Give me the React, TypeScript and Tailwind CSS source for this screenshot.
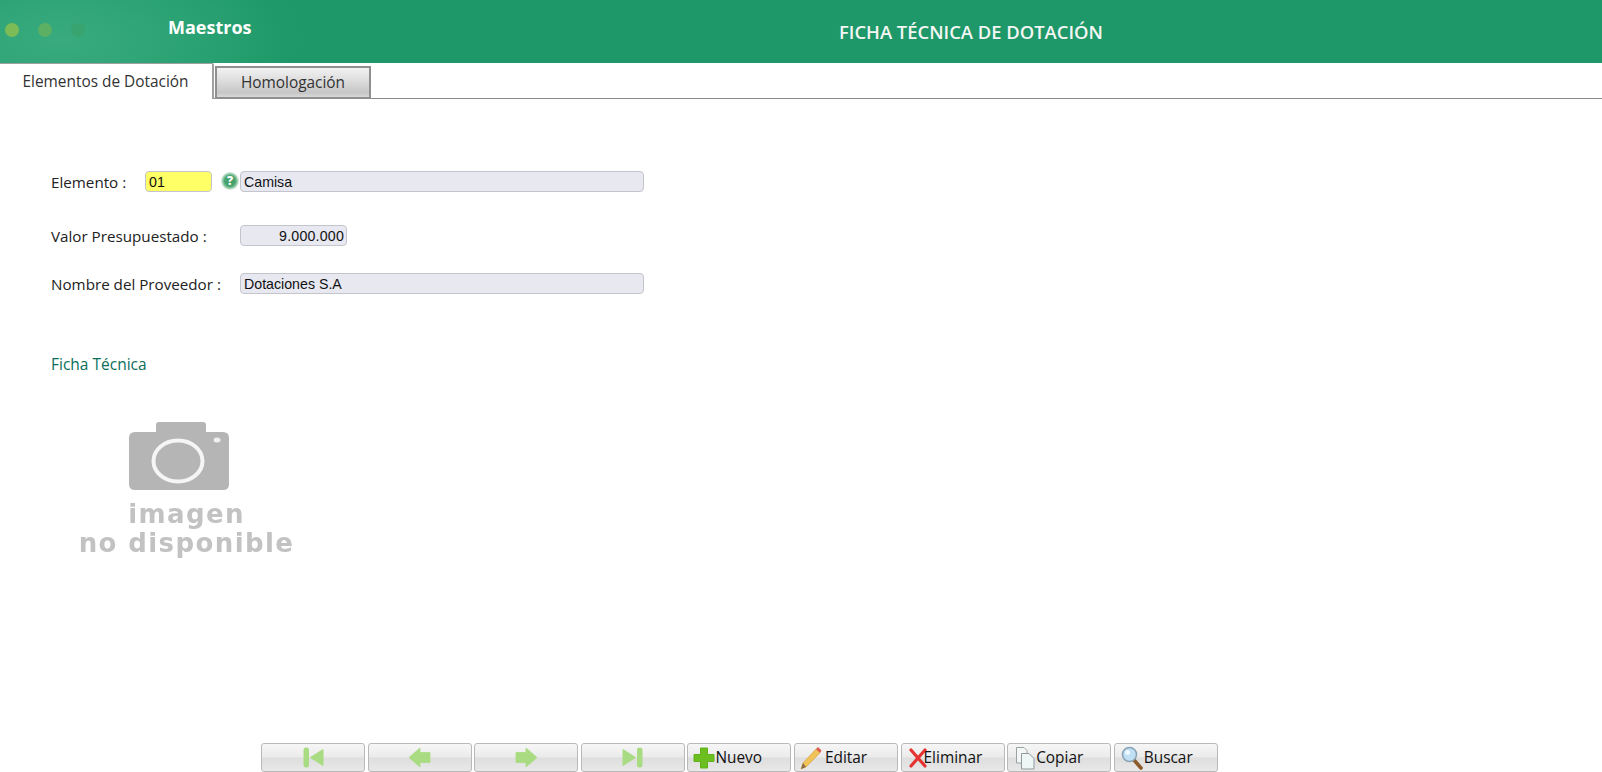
import React from "react";

const uiFont = "font-['Open_Sans','Noto_Sans',sans-serif]";
const fieldFont = "font-['Liberation_Sans',Arial,sans-serif]";

const NavFirst = () => (
  <svg width="21" height="21" viewBox="0 0 21 21">
    <rect x="0.5" y="0.5" width="5.5" height="20" rx="2.5" fill="#a9dc82" />
    <path d="M7.5 10.5 L20 2.5 V18.5 Z" fill="#a9dc82" stroke="#a9dc82" strokeLinejoin="round" />
  </svg>
);

const NavPrev = () => (
  <svg width="23" height="21" viewBox="0 0 23 21">
    <path d="M1 10.5 L12 1 V5.5 H22 V15.5 H12 V20 Z" fill="#a9dc82" stroke="#a9dc82" strokeWidth="0.8" strokeLinejoin="round" />
  </svg>
);

const NavNext = () => (
  <svg width="23" height="21" viewBox="0 0 23 21">
    <path d="M22 10.5 L11 1 V5.5 H1 V15.5 H11 V20 Z" fill="#a9dc82" stroke="#a9dc82" strokeWidth="0.8" strokeLinejoin="round" />
  </svg>
);

const NavLast = () => (
  <svg width="21" height="21" viewBox="0 0 21 21">
    <path d="M1 2.5 L13.5 10.5 L1 18.5 Z" fill="#a9dc82" stroke="#a9dc82" strokeLinejoin="round" />
    <rect x="15" y="0.5" width="5.5" height="20" rx="2.5" fill="#a9dc82" />
  </svg>
);

const PlusIcon = () => (
  <svg width="22" height="22" viewBox="0 0 22 22" className="shrink-0">
    <path d="M7.5 1 H14.5 V7.5 H21 V14.5 H14.5 V21 H7.5 V14.5 H1 V7.5 H7.5 Z" fill="#6cbf1f" stroke="#62b01a" strokeLinejoin="round" />
  </svg>
);

const PencilIcon = () => (
  <svg width="22" height="24" viewBox="0 0 22 24" className="shrink-0">
    <path d="M16 3 L20 7 L6 21 L1 23 L3 17 Z" fill="#f2c25a" stroke="#d29a38" strokeWidth="0.6" />
    <path d="M16 3 L18 1 L21.5 4.5 L20 7 Z" fill="#dd5b4a" />
    <path d="M3 17 L6 21 L1 23 Z" fill="#8a6a48" />
  </svg>
);

const CrossIcon = () => (
  <svg width="18" height="20" viewBox="0 0 18 20" className="shrink-0">
    <path d="M2 2 L16 18 M16 2 L2 18" stroke="#e53333" strokeWidth="3.2" strokeLinecap="round" />
  </svg>
);

const CopyIcon = () => (
  <svg width="20" height="24" viewBox="0 0 20 24" className="shrink-0">
    <path d="M1.5 1.5 H9 L12 4.5 V17 H1.5 Z" fill="#f4f6f6" stroke="#9aa3a3" />
    <path d="M6.5 7.5 H14 L19 12.5 V23 H6.5 Z" fill="#eef6f6" stroke="#8f9a9a" />
  </svg>
);

const SearchIcon = () => (
  <svg width="22" height="24" viewBox="0 0 22 24" className="shrink-0">
    <path d="M13 14 L20 22" stroke="#8a5a2b" strokeWidth="3.6" strokeLinecap="round" />
    <circle cx="8.5" cy="8.5" r="7" fill="#bfe0f5" stroke="#8aa3b5" strokeWidth="1.6" />
    <circle cx="6.5" cy="6.5" r="2.5" fill="#eef8fd" />
  </svg>
);

const CameraPlaceholder = () => (
  <div className="relative w-[217px] h-[147px]">
    <svg width="100" height="68" viewBox="0 0 100 68" className="absolute left-[51px] top-[7px]">
      <path d="M27 10 V3 Q27 0 30 0 H74 Q77 0 77 3 V10 H94 Q100 10 100 16 V62 Q100 68 94 68 H6 Q0 68 0 62 V16 Q0 10 6 10 Z" fill="#b5b5b5" />
      <ellipse cx="49" cy="39" rx="24.5" ry="20.5" fill="#b5b5b5" stroke="#f5f5f5" strokeWidth="4" />
      <ellipse cx="88" cy="18" rx="3.5" ry="2.5" fill="#f0f0f0" />
    </svg>
    <div className="absolute left-0 right-0 top-[85px] text-center font-['DejaVu_Sans',sans-serif] font-bold text-[#c2c2c2] text-[26px] leading-[29px] tracking-[1.4px] blur-[0.6px]">
      <div>imagen</div>
      <div>no disponible</div>
    </div>
  </div>
);

const ToolButton = ({ className, children }: { className: string; children: React.ReactNode }) => (
  <button className={`flex items-center w-[104px] h-[29px] rounded-[3px] border border-[#b9b9b9] bg-[linear-gradient(#f6f6f6_0%,#ebebeb_48%,#dedede_52%,#e8e8e8_100%)] text-[15.4px] text-[#111] ${uiFont} ${className}`}>
    {children}
  </button>
);

const inputClass = `h-[21px] rounded-[4px] border border-[#c4c4cc] bg-[#e8e8f1] text-[14.2px] leading-[21px] text-[#111] ${fieldFont}`;
const labelClass = "mt-[1px] text-[15.2px] leading-[20px] text-[#222]";

export default function App() {
  return (
    <div className={`flex flex-col w-[1602px] h-[772px] overflow-hidden bg-white ${uiFont}`}>
      {/* Header */}
      <header className="flex items-center h-[63px] bg-[#1e9868] bg-[radial-gradient(ellipse_240px_110px_at_60px_40px,#39ab7e_0%,#2ba273_55%,#1e9868_100%)]">
        <div className="flex items-center gap-[19px] w-[168px] pl-[5px] mb-[4px]">
          <span className="w-[14px] h-[14px] rounded-full bg-[#7dbb57]" />
          <span className="w-[14px] h-[14px] rounded-full bg-[#5bb063]" />
          <span className="w-[14px] h-[14px] rounded-full bg-[#38a46f]" />
        </div>
        <span className="w-[671px] mb-[8px] text-[18px] font-bold text-white">Maestros</span>
        <h1 className="text-[18.4px] leading-[26px] font-semibold text-[#f4f6f4]">
          FICHA TÉCNICA DE DOTACIÓN
        </h1>
      </header>

      {/* Tabs */}
      <nav className="flex items-end h-[36px] border-b border-[#8a8a8a]">
        <div className="flex items-center justify-center w-[214px] h-[36px] -mb-px pr-px bg-white border-t border-r-2 border-[#a0a0a0] rounded-tr-[2px] text-[15.4px] text-[#333]">
          Elementos de Dotación
        </div>
        <div className="flex items-center justify-center w-[156px] h-[33px] -mb-px ml-px border-2 border-[#8f8f8f] bg-[linear-gradient(#f2f2f2,#dcdcdc_45%,#c6c6c6_85%,#d8d8d8)] text-[15.4px] text-[#333]">
          Homologación
        </div>
      </nav>

      {/* Form */}
      <main className="flex flex-col pl-[51px]">
        <div className="flex items-center mt-[71px] h-[22px]">
          <label className={`w-[94px] ${labelClass}`}>Elemento :</label>
          <div className={`${inputClass} w-[67px] !bg-[#ffff66] pl-[3px]`}>01</div>
          <span className="flex items-center justify-center ml-[9px] mr-px w-[18px] h-[18px] rounded-full bg-[radial-gradient(circle_closest-side,#3a9a60_0%,#4aa56f_60%,#a8d4b8_85%,#e2f0e6_100%)] text-[12px] font-extrabold leading-none text-white">
            ?
          </span>
          <div className={`${inputClass} w-[404px] pl-[3px]`}>Camisa</div>
        </div>

        <div className="flex items-center mt-[32px] h-[22px]">
          <label className={`w-[189px] ${labelClass}`}>Valor Presupuestado :</label>
          <div className={`${inputClass} w-[107px] pr-[2px] text-right tracking-[0.2px]`}>9.000.000</div>
        </div>

        <div className="flex items-center mt-[26px] h-[22px]">
          <label className={`w-[189px] ${labelClass}`}>Nombre del Proveedor :</label>
          <div className={`${inputClass} w-[404px] pl-[3px]`}>Dotaciones S.A</div>
        </div>

        <h2 className="mt-[60px] text-[15.5px] leading-[20px] text-[#0b6e5a]">Ficha Técnica</h2>

        <div className="mt-[41px] ml-[27px]">
          <CameraPlaceholder />
        </div>
      </main>

      {/* Toolbar */}
      <footer className="flex gap-[2.6px] mt-auto ml-[261px]">
        <ToolButton className="justify-center"><NavFirst /></ToolButton>
        <ToolButton className="justify-center"><NavPrev /></ToolButton>
        <ToolButton className="justify-center"><NavNext /></ToolButton>
        <ToolButton className="justify-center"><NavLast /></ToolButton>
        <ToolButton className="pl-[5px]"><PlusIcon /><span>Nuevo</span></ToolButton>
        <ToolButton className="pl-[5px]"><PencilIcon /><span className="ml-[3px]">Editar</span></ToolButton>
        <ToolButton className="pl-[7px]"><CrossIcon /><span className="-ml-[3px]">Eliminar</span></ToolButton>
        <ToolButton className="pl-[7px]"><CopyIcon /><span className="ml-px">Copiar</span></ToolButton>
        <ToolButton className="pl-[6px]"><SearchIcon /><span className="ml-px">Buscar</span></ToolButton>
      </footer>
    </div>
  );
}
